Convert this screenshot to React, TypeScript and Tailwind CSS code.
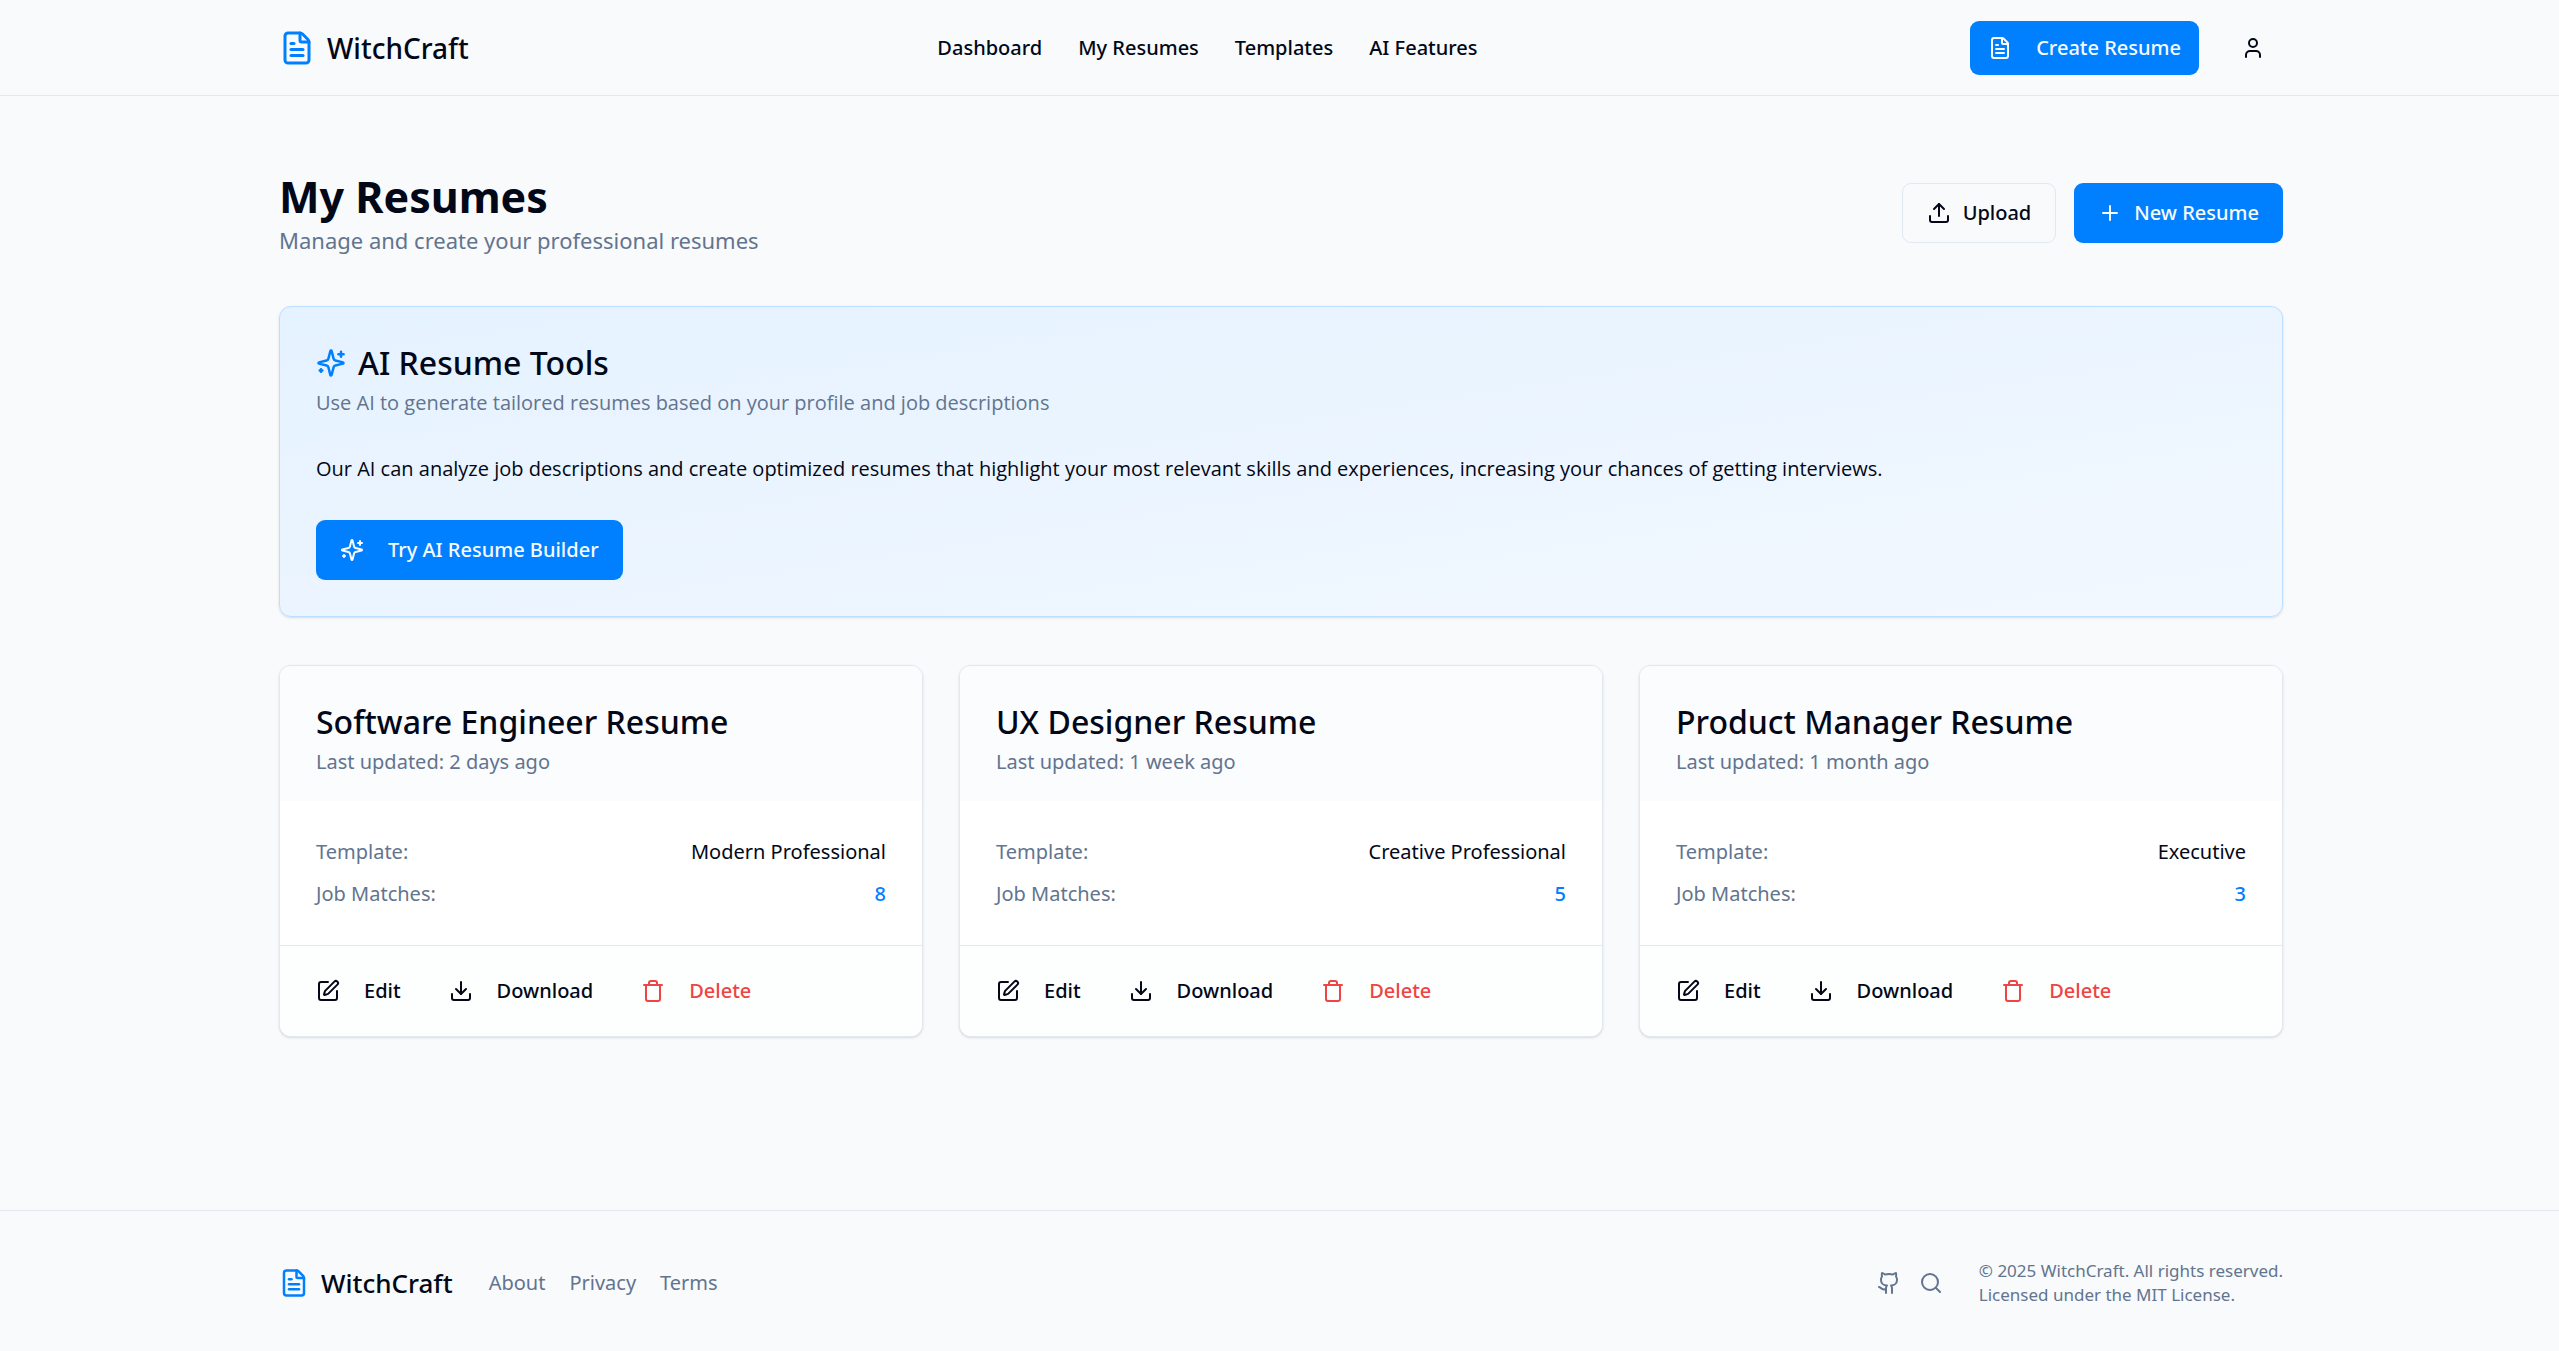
import type { ReactNode } from "react";
import { Download, FileText, Github, Plus, Search, SquarePen, Trash, Upload, User } from "lucide-react";

const container = "mx-auto w-full max-w-[2101px] pl-[50px] pr-[47px]";

const navLinks = ["Dashboard", "My Resumes", "Templates", "AI Features"];
const footerLinks = ["About", "Privacy", "Terms"];

const resumes = [
  { title: "Software Engineer Resume", updated: "2 days ago", template: "Modern Professional", matches: 8 },
  { title: "UX Designer Resume", updated: "1 week ago", template: "Creative Professional", matches: 5 },
  { title: "Product Manager Resume", updated: "1 month ago", template: "Executive", matches: 3 },
];

function SparklesIcon({ className }: { className: string }) {
  return (
    <svg
      viewBox="0 0 24 24"
      fill="none"
      stroke="currentColor"
      strokeWidth="2"
      strokeLinecap="round"
      strokeLinejoin="round"
      aria-hidden="true"
      className={className}
    >
      <path d="M9.937 15.5A2 2 0 0 0 8.5 14.063l-6.135-1.582a.5.5 0 0 1 0-.962L8.5 9.936A2 2 0 0 0 9.937 8.5l1.582-6.135a.5.5 0 0 1 .963 0L14.063 8.5A2 2 0 0 0 15.5 9.937l6.135 1.581a.5.5 0 0 1 0 .964L15.5 14.063a2 2 0 0 0-1.437 1.437l-1.582 6.135a.5.5 0 0 1-.963 0z" />
      <path d="M20 3v4" />
      <path d="M22 5h-4" />
      <path d="M4 17v2" />
      <path d="M5 18H3" />
    </svg>
  );
}

function CardAction({ icon, label, danger }: { icon: ReactNode; label: string; danger?: boolean }) {
  return (
    <button
      type="button"
      className={
        danger
          ? "flex h-[54px] items-center gap-6 rounded-[9px] px-[18px] font-medium text-[#ef4444]"
          : "flex h-[54px] items-center gap-6 rounded-[9px] px-[18px] font-medium"
      }
    >
      {icon}
      {label}
    </button>
  );
}

function ResumeCard({ title, updated, template, matches }: (typeof resumes)[number]) {
  return (
    <article className="overflow-hidden rounded-xl border border-slate-200 bg-white shadow-sm">
      <div className="bg-[#fbfcfe] px-9 pt-9 pb-6">
        <h2 className="text-[32px] leading-10 font-medium">{title}</h2>
        <p className="mt-[5px] text-slate-500">Last updated: {updated}</p>
      </div>
      <dl className="flex flex-col gap-3 p-9">
        <div className="flex justify-between">
          <dt className="text-slate-500">Template:</dt>
          <dd>{template}</dd>
        </div>
        <div className="flex justify-between">
          <dt className="text-slate-500">Job Matches:</dt>
          <dd className="font-medium text-[#0080ff]">{matches}</dd>
        </div>
      </dl>
      <div className="flex gap-3 border-t border-slate-200 bg-[#fdfefe] p-[18px]">
        <CardAction icon={<SquarePen className="size-6" />} label="Edit" />
        <CardAction icon={<Download className="size-6" />} label="Download" />
        <CardAction icon={<Trash className="size-6" />} label="Delete" danger />
      </div>
    </article>
  );
}

export default function App() {
  return (
    <div className="flex min-h-screen flex-col bg-slate-50 font-['Noto_Sans','Open_Sans',sans-serif] text-[20px] leading-[30px] text-[#020817]">
      <header className="border-b border-slate-200">
        <div className={`${container} flex h-[95px] items-center justify-between`}>
          <a href="#" className="flex items-center gap-3 text-[28px] font-medium">
            <FileText className="size-9 text-[#0080ff]" />
            WitchCraft
          </a>
          <nav className="flex gap-9 pr-6 font-medium">
            {navLinks.map((link) => (
              <a key={link} href="#">{link}</a>
            ))}
          </nav>
          <div className="flex items-center gap-6">
            <button type="button" className="flex h-[54px] items-center gap-6 rounded-[9px] bg-[#0080ff] px-[18px] font-medium text-slate-50">
              <FileText className="size-6" />
              Create Resume
            </button>
            <button type="button" aria-label="Account" className="flex size-[60px] items-center justify-center rounded-[9px]">
              <User className="size-6" />
            </button>
          </div>
        </div>
      </header>

      <main className={`${container} flex flex-1 flex-col gap-12 py-[72px]`}>
        <div className="flex h-[90px] items-center justify-between">
          <div>
            <h1 className="text-[43px] leading-[54px] font-bold">My Resumes</h1>
            <p className="text-[22px] leading-8 text-slate-500">Manage and create your professional resumes</p>
          </div>
          <div className="flex gap-[18px]">
            <button type="button" className="flex h-[60px] items-center gap-3 rounded-[9px] border border-slate-200 px-6 font-medium">
              <Upload className="size-6" />
              Upload
            </button>
            <button type="button" className="flex h-[60px] items-center gap-3 rounded-[9px] bg-[#0080ff] px-6 font-medium text-slate-50">
              <Plus className="size-6" />
              New Resume
            </button>
          </div>
        </div>

        <section className="rounded-xl border border-[#bddeff] bg-linear-to-br from-[#e5f2ff] to-[#f2f8ff] p-9 shadow-sm">
          <h2 className="flex items-center gap-3 text-[32px] leading-10 font-medium">
            <SparklesIcon className="size-[30px] text-[#0080ff]" />
            AI Resume Tools
          </h2>
          <p className="mt-[5px] font-['Open_Sans','Noto_Sans',sans-serif] text-slate-500">
            Use AI to generate tailored resumes based on your profile and job descriptions
          </p>
          <p className="my-9 font-['Open_Sans','Noto_Sans',sans-serif]">
            Our AI can analyze job descriptions and create optimized resumes that highlight your most relevant skills
            and experiences, increasing your chances of getting interviews.
          </p>
          <button type="button" className="flex h-[60px] items-center gap-6 rounded-[9px] bg-[#0080ff] px-6 font-medium text-slate-50">
            <SparklesIcon className="size-6" />
            Try AI Resume Builder
          </button>
        </section>

        <section className="grid grid-cols-3 gap-9">
          {resumes.map((resume) => (
            <ResumeCard key={resume.title} {...resume} />
          ))}
        </section>
      </main>

      <footer className="border-t border-slate-200 pt-12 pb-11">
        <div className={`${container} flex items-center justify-between`}>
          <div className="flex items-center gap-9">
            <a href="#" className="flex items-center gap-3 text-[26px] font-medium">
              <FileText className="size-[30px] text-[#0080ff]" />
              WitchCraft
            </a>
            <nav className="flex gap-6 text-slate-500">
              {footerLinks.map((link) => (
                <a key={link} href="#">{link}</a>
              ))}
            </nav>
          </div>
          <div className="flex items-center gap-9 text-slate-500">
            <div className="flex gap-[18px]">
              <a href="#" aria-label="GitHub"><Github className="size-6" /></a>
              <a href="#" aria-label="Search"><Search className="size-6" /></a>
            </div>
            <p className="text-[17px] leading-6">
              © 2025 WitchCraft. All rights reserved.
              <br />
              Licensed under the MIT License.
            </p>
          </div>
        </div>
      </footer>
    </div>
  );
}
